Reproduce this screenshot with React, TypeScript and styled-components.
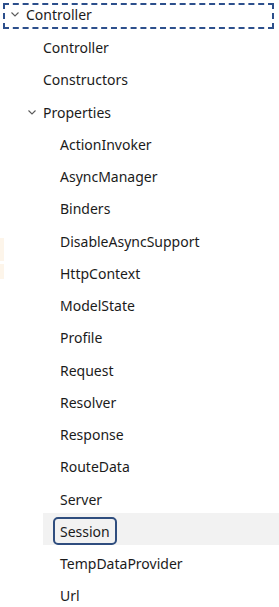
import React from "react";
import styled, { createGlobalStyle } from "styled-components";

type Item = {
  label: string;
  level: number;
  expandable?: boolean;
  selected?: boolean;
  focused?: boolean;
};

const items: Item[] = [
  { label: "Controller", level: 0, expandable: true, focused: true },
  { label: "Controller", level: 1 },
  { label: "Constructors", level: 1 },
  { label: "Properties", level: 1, expandable: true },
  ...[
    "ActionInvoker",
    "AsyncManager",
    "Binders",
    "DisableAsyncSupport",
    "HttpContext",
    "ModelState",
    "Profile",
    "Request",
    "Resolver",
    "Response",
    "RouteData",
    "Server",
    "Session",
    "TempDataProvider",
    "Url",
  ].map((label) => ({ label, level: 2, selected: label === "Session" })),
];

const Chevron = () => (
  <svg width="8" height="5" viewBox="0 0 8 5">
    <path d="M0.5 0.5 L4 4 L7.5 0.5" fill="none" stroke="#5a5a5a" strokeWidth="1.1" />
  </svg>
);

const App: React.FC = () => {
  return (
    <>
      <GlobalStyle />
      <STree>
        {items.map((item, i) =>
          item.focused ? (
            <SFocusedRow key={i}>
              <SToggle>{item.expandable && <Chevron />}</SToggle>
              <SLabel>{item.label}</SLabel>
            </SFocusedRow>
          ) : (
            <SRow key={i} $level={item.level} $selected={item.selected}>
              <SToggle>{item.expandable && <Chevron />}</SToggle>
              <SLabel $selected={item.selected}>{item.label}</SLabel>
            </SRow>
          )
        )}
        <SEdge $top={235} $height={23} />
        <SEdge $top={261} $height={15} />
      </STree>
    </>
  );
};

export default App;

const GlobalStyle = createGlobalStyle`
  body {
    margin: 0;
    background: #fff;
    font-family: "Noto Sans", "Open Sans", sans-serif;
  }
`;

const STree = styled.ul`
  position: relative;
  list-style: none;
  margin: 0;
  padding: 0;
  width: 279px;
  color: #1b1b1b;
  font-size: 14px;
`;

const SRow = styled.li<{ $level: number; $selected?: boolean }>`
  display: flex;
  align-items: center;
  box-sizing: border-box;
  height: 32.25px;
  padding-top: 5px;
  margin-left: ${(p) => p.$level * 17 + 9}px;
  background: ${(p) => (p.$selected ? "#f2f2f2" : "transparent")};
`;

const SFocusedRow = styled.li`
  display: flex;
  align-items: center;
  box-sizing: border-box;
  height: 26px;
  margin: 3px 5px 0 3px;
  padding: 0 0 3px 4px;
  border: 2px dashed #2c4f8c;
`;

const SToggle = styled.span`
  display: flex;
  align-items: center;
  justify-content: center;
  width: 11px;
  flex: none;
  margin-right: 6px;
`;

const SLabel = styled.span<{ $selected?: boolean }>`
  display: inline-flex;
  align-items: center;
  height: 28px;
  box-sizing: border-box;
  margin-left: ${(p) => (p.$selected ? "-7px" : "0")};
  padding: ${(p) => (p.$selected ? "0 5px" : "0")};
  border: ${(p) => (p.$selected ? "2px solid #2f4d7e" : "none")};
  border-radius: 5px;
  white-space: nowrap;
`;

const SEdge = styled.div<{ $top: number; $height: number }>`
  position: absolute;
  left: 0;
  top: ${(p) => p.$top}px;
  width: 4px;
  height: ${(p) => p.$height}px;
  background: #fdf5ea;
`;
